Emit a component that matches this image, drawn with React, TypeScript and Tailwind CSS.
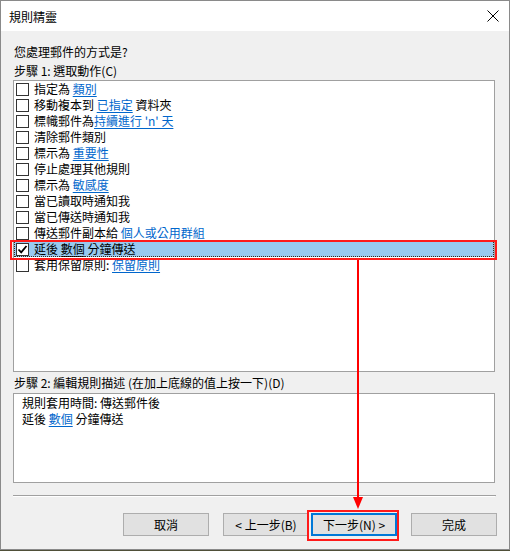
import React from "react";

const font = { fontFamily: '"Noto Sans CJK TC", "Noto Sans", sans-serif' };

function Link({ children }: { children: React.ReactNode }) {
  return <span className="text-[#0066cc] underline underline-offset-2 decoration-[#0066cc]">{children}</span>;
}

function Check({ checked }: { checked?: boolean }) {
  return (
    <div className="w-[13px] h-[13px] border border-[#333333] bg-white flex items-center justify-center shrink-0">
      {checked && (
        <svg width="11" height="11" viewBox="0 0 11 11">
          <path d="M1.5 5.5 L4.2 8.3 L9.5 2" fill="none" stroke="#000" strokeWidth="1.8" />
        </svg>
      )}
    </div>
  );
}

type Row = { content: React.ReactNode; checked?: boolean; selected?: boolean };

const rows: Row[] = [
  { content: <>指定為 <Link>類別</Link></> },
  { content: <>移動複本到 <Link>已指定</Link> 資料夾</> },
  { content: <>標幟郵件為<Link>持續進行 'n' 天</Link></> },
  { content: <>清除郵件類別</> },
  { content: <>標示為 <Link>重要性</Link></> },
  { content: <>停止處理其他規則</> },
  { content: <>標示為 <Link>敏感度</Link></> },
  { content: <>當已讀取時通知我</> },
  { content: <>當已傳送時通知我</> },
  { content: <>傳送郵件副本給 <Link>個人或公用群組</Link></> },
  {
    content: <>延後 <span className="underline underline-offset-2">數個</span> 分鐘傳送</>,
    checked: true,
    selected: true,
  },
  { content: <>套用保留原則: <Link>保留原則</Link></> },
];

function Btn({ children, focused }: { children: React.ReactNode; focused?: boolean }) {
  return (
    <div
      className={
        "w-[86px] h-[23px] flex items-center justify-center bg-[#e1e1e1] text-[12px] text-black " +
        (focused ? "border-2 border-[#0078d7]" : "border border-[#adadad]")
      }
    >
      {children}
    </div>
  );
}

export default function App() {
  return (
    <div className="w-[510px] h-[551px] bg-[#4f4f38] relative" style={font}>
      <div className="w-[510px] h-[550px] border border-[#8a8a8a] bg-[#f0f0f0] flex flex-col text-[12px] leading-[16px] text-black">
        {/* title bar */}
        <div className="h-[30px] bg-white flex items-center justify-between pl-[8px] pr-[9px] shrink-0">
          <span className="text-[12px] pt-[1px]">規則精靈</span>
          <svg width="12" height="12" viewBox="0 0 12 12" className="mr-[1px]">
            <path d="M0.5 0.5 L11.5 11.5 M11.5 0.5 L0.5 11.5" stroke="#000" strokeWidth="1" />
          </svg>
        </div>
        {/* body */}
        <div className="flex flex-col pl-[12px] pr-[14px] pt-[13px]">
          <div className="h-[16px] pl-[1px]">您處理郵件的方式是?</div>
          <div className="h-[16px] pl-[1px] mt-[3px]">步驟 1: 選取動作(C)</div>
          <div className="mt-[1px] h-[292px] border border-[#a0a0a0] bg-white flex flex-col">
            {rows.map((r, i) => (
              <div
                key={i}
                className={
                  "h-[16px] flex items-center gap-[5px] pl-[2px] shrink-0 " +
                  (r.selected ? "bg-[#99c9ef] outline outline-1 outline-dotted outline-[#3a2a1a] -outline-offset-1" : "")
                }
              >
                <Check checked={r.checked} />
                <span className="whitespace-pre">{r.content}</span>
              </div>
            ))}
          </div>
          <div className="h-[16px] pl-[1px] mt-[3px]">步驟 2: 編輯規則描述 (在加上底線的值上按一下)(D)</div>
          <div className="mt-[2px] h-[90px] border border-[#a0a0a0] bg-white pt-[1px] pl-[8px]">
            <div className="h-[16px]">規則套用時間: 傳送郵件後</div>
            <div className="h-[16px]">延後 <Link>數個</Link> 分鐘傳送</div>
          </div>
          <div className="mt-[12px] h-[1px] bg-[#a0a0a0] mr-[-1px]" />
          <div className="h-[1px] bg-white" />
          <div className="mt-[16px] flex justify-end mr-[-2px]">
            <Btn>取消</Btn>
            <div className="w-[14px]" />
            <Btn>&lt; 上一步(B)</Btn>
            <div className="w-[2px]" />
            <Btn focused>下一步(N) &gt;</Btn>
            <div className="w-[14px]" />
            <Btn>完成</Btn>
          </div>
        </div>
      </div>

      {/* annotation overlays */}
      <div className="absolute left-[10px] top-[240px] w-[487px] h-[20px] border-2 border-[#ff1a1a]" />
      <div className="absolute left-[307px] top-[510px] w-[92px] h-[31px] border-2 border-[#ff1a1a]" />
      <svg className="absolute left-[350px] top-[259px]" width="16" height="252" viewBox="0 0 16 252">
        <line x1="8" y1="1" x2="8" y2="240" stroke="#ff0000" strokeWidth="2" />
        <path d="M3 238 L13 238 L8 250 Z" fill="#ff0000" />
      </svg>
    </div>
  );
}
